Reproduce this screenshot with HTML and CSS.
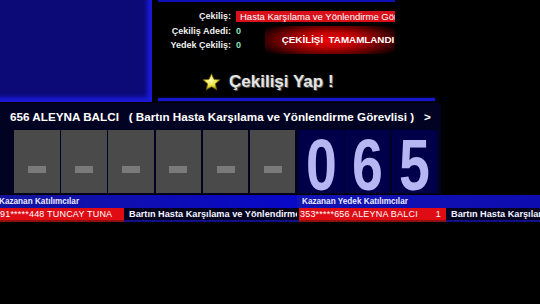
FILE: index.html
```html
<!DOCTYPE html>
<html>
<head>
<meta charset="utf-8">
<link rel="stylesheet" href="styles.css">
</head>
<body>
<div class="screen">
  <div class="top">
    <div class="panel"></div>
    <div class="info">
      <div class="line-top"></div>
      <div class="form">
        <div class="lbl">Çekiliş:</div>
        <div class="cekilis">Hasta Karşılama ve Yönlendirme Görevlisi</div>
        <div class="lbl">Çekiliş Adedi:</div>
        <div class="val">0</div>
        <div class="done"><span>ÇEKİLİŞİ&nbsp; TAMAMLANDI</span></div>
        <div class="lbl">Yedek Çekiliş:</div>
        <div class="val">0</div>
      </div>
      <div class="yap">
        <svg class="star" width="19" height="18" viewBox="0 0 20 19">
          <defs>
            <radialGradient id="sg" cx="45%" cy="40%" r="60%">
              <stop offset="0" stop-color="#ffffb0"/>
              <stop offset="0.6" stop-color="#e8e040"/>
              <stop offset="1" stop-color="#a09010"/>
            </radialGradient>
          </defs>
          <polygon points="10,0.8 12.6,6.6 19,7.2 14.1,11.4 15.6,17.8 10,14.5 4.4,17.8 5.9,11.4 1,7.2 7.4,6.6" fill="url(#sg)" stroke="#6a5a00" stroke-width="0.8"/>
        </svg>
        <span class="yap-text">Çekilişi Yap !</span>
      </div>
      <div class="line-bottom"></div>
    </div>
  </div>

  <div class="mid">
    <div class="title">656 ALEYNA BALCI   ( Bartın Hasta Karşılama ve Yönlendirme Görevlisi )   &gt;</div>
    <div class="slots">
      <div class="slot"><i></i></div>
      <div class="slot"><i></i></div>
      <div class="slot"><i></i></div>
      <div class="slot"><i></i></div>
      <div class="slot"><i></i></div>
      <div class="slot"><i></i></div>
      <div class="digit"><span>0</span></div>
      <div class="digit"><span>6</span></div>
      <div class="digit"><span>5</span></div>
    </div>
  </div>

  <div class="lists">
    <div class="list">
      <div class="lhead">Kazanan Katılımcılar</div>
      <div class="lrow">
        <div class="red w-left">91*****448 TUNCAY TUNA</div>
        <div class="rest">Bartın Hasta Karşılama ve Yönlendirme Görevlisi</div>
      </div>
    </div>
    <div class="list right">
      <div class="lhead">Kazanan Yedek Katılımcılar</div>
      <div class="lrow">
        <div class="red w-right"><span>353*****656 ALEYNA BALCI</span><span>1</span></div>
        <div class="rest">Bartın Hasta Karşılama ve Yönlendirme Görevlisi</div>
      </div>
    </div>
  </div>
</div>
</body>
</html>
```

FILE: styles.css
```css
html, body {
  margin: 0;
  padding: 0;
  background: #000;
}
body {
  width: 540px;
  height: 304px;
  overflow: hidden;
  font-family: "Liberation Sans", Arial, sans-serif;
  color: #fff;
}
.screen {
  display: flex;
  flex-direction: column;
}

/* top section */
.top {
  display: flex;
  height: 103px;
}
.panel {
  width: 152px;
  height: 102px;
  background: #0b0a76;
  box-shadow: inset -5px -5px 4px #1a1ad8;
}
.info {
  flex: 1;
  display: flex;
  flex-direction: column;
  padding-left: 6px;
}
.line-top {
  width: 237px;
  height: 2px;
  background: #1010b8;
}
.form {
  margin-top: 7px;
  display: grid;
  grid-template-columns: 78px 29px 130px;
  grid-auto-rows: 14.5px;
  align-items: center;
  font-size: 9px;
  font-weight: bold;
}
.lbl {
  text-align: right;
  padding-right: 5px;
  color: #f0f0f0;
}
.cekilis {
  grid-column: 2 / 4;
  height: 11px;
  line-height: 11px;
  background: #d8101a;
  color: #fff;
  font-weight: normal;
  font-size: 9.5px;
  padding-left: 4px;
  overflow: hidden;
  white-space: nowrap;
}
.val {
  color: #8fe0b8;
}
.done {
  grid-column: 3;
  grid-row: 2 / 4;
  align-self: stretch;
  margin: 2px 0 -1px 0;
  display: flex;
  align-items: center;
  justify-content: center;
  background: radial-gradient(ellipse 62% 75% at 50% 50%, #f00008 0%, #c00000 35%, #580000 72%, #000 100%);
  font-size: 9.8px;
  color: #fff;
  white-space: nowrap;
}
.done span {
  padding-left: 16px;
}
.yap {
  margin-top: 17px;
  height: 24px;
  display: flex;
  align-items: center;
  padding-left: 44px;
  gap: 8px;
}
.yap-text {
  font-size: 17px;
  font-weight: bold;
  color: #e4e4e4;
  text-shadow: 1px 1px 0 #555, 0 0 2px #333;
}
.line-bottom {
  margin-top: 4px;
  width: 277px;
  height: 3px;
  background: #1616d0;
  box-shadow: 0 0 2px #1010a0;
}

/* middle section */
.mid {
  width: 441px;
  height: 91px;
  background: #020222;
  display: flex;
  flex-direction: column;
}
.title {
  height: 27px;
  line-height: 28px;
  padding-left: 10px;
  font-size: 11.7px;
  font-weight: bold;
  white-space: pre;
  color: #fff;
}
.slots {
  display: flex;
  padding-left: 14px;
  gap: 1.7px;
  height: 63px;
}
.slot {
  width: 45.5px;
  height: 63px;
  background: #4a4a4a;
  display: flex;
  align-items: flex-end;
  justify-content: center;
  padding-bottom: 20px;
  box-sizing: border-box;
}
.slot i {
  display: block;
  width: 18px;
  height: 7px;
  background: #7a7a7a;
}
.slot:nth-child(6) {
  margin-right: 1.5px;
}
.digit {
  width: 45px;
  height: 63px;
  box-sizing: border-box;
  padding-top: 6px;
  background: #00004a;
  text-align: center;
}
.digit span {
  display: block;
  font-size: 73px;
  font-weight: bold;
  color: #b6b6f2;
  transform: scaleX(0.76);
  line-height: 57px;
}

/* lists */
.lists {
  margin-top: 1px;
  display: grid;
  grid-template-columns: 297px 243px;
}
.list {
  display: flex;
  flex-direction: column;
  overflow: hidden;
}
.lhead {
  height: 13px;
  line-height: 13px;
  background: linear-gradient(to right, #14149e, #0808c8);
  font-size: 8.2px;
  font-weight: bold;
  color: #eaeaff;
  margin-left: -1px;
  white-space: nowrap;
}
.right .lhead {
  padding-left: 5px;
  margin-left: 0;
  background: linear-gradient(to right, #1414b4, #0c0cb0);
}
.lrow {
  display: flex;
  height: 12px;
  line-height: 12px;
  white-space: nowrap;
  border-bottom: 2px solid #10108a;
}
.right .lrow {
  padding-left: 2px;
}
.red {
  background: #e00c14;
  color: #fff;
  font-size: 9px;
  letter-spacing: 0.2px;
  box-shadow: 0 2px 0 #901010;
}
.w-left {
  width: 124px;
}
.w-right {
  width: 141px;
  padding: 0 5px 0 1px;
  display: flex;
  justify-content: space-between;
}
.rest {
  flex: 1;
  padding-left: 5px;
  font-size: 9.2px;
  font-weight: bold;
  color: #f4f4ff;
  background: #02021e;
  overflow: hidden;
}
```
